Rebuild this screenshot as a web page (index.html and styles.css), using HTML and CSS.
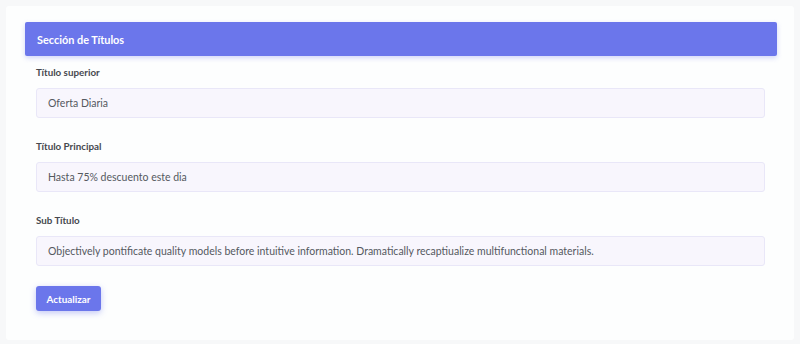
FILE: index.html
```html
<!DOCTYPE html>
<html lang="es">
<head>
<meta charset="utf-8">
<title>Sección de Títulos</title>
<link rel="stylesheet" href="styles.css">
</head>
<body>
<div class="card">
  <div class="card-header">Sección de Títulos</div>
  <form class="card-body">
    <div class="field">
      <label class="label">Título superior</label>
      <div class="input">Oferta Diaria</div>
    </div>
    <div class="field">
      <label class="label">Título Principal</label>
      <div class="input">Hasta 75% descuento este dia</div>
    </div>
    <div class="field">
      <label class="label">Sub Título</label>
      <div class="input">Objectively pontificate quality models before intuitive information. Dramatically recaptiualize multifunctional materials.</div>
    </div>
    <div class="actions">
      <button type="button" class="btn">Actualizar</button>
    </div>
  </form>
</div>
</body>
</html>
```
FILE: styles.css
```css
html, body {
  margin: 0;
  padding: 0;
}
body {
  background: #f7f8f9;
  font-family: "Lato", "Noto Sans", sans-serif;
  padding: 6px 6px 4px 6px;
  height: 344px;
  box-sizing: border-box;
}
.card {
  background: #fdfefe;
  border-radius: 3px;
  padding: 16px 17px 0 19px;
  height: 334px;
  box-sizing: border-box;
}
.card-header {
  background: #6b76eb;
  color: #fff;
  font-weight: 700;
  font-size: 10.9px;
  height: 34px;
  display: flex;
  align-items: center;
  padding-left: 12px;
  border-radius: 2px;
  box-shadow: 0 2px 5px rgba(107, 118, 235, 0.3);
}
.card-body {
  padding: 10px 12px 0 11px;
  display: flex;
  flex-direction: column;
}
.field {
  display: flex;
  flex-direction: column;
}
.field + .field {
  margin-top: 22px;
}
.label {
  font-size: 9.8px;
  font-weight: 700;
  color: #46494f;
  line-height: 12px;
  margin-bottom: 10px;
}
.input {
  height: 30px;
  box-sizing: border-box;
  background: #f8f6fd;
  border: 1px solid #e9e7f8;
  border-radius: 3px;
  padding: 0 11px;
  display: flex;
  align-items: center;
  font-size: 10.5px;
  color: #55595f;
}
.actions {
  margin-top: 20px;
}
.btn {
  background: #6b76eb;
  color: #fff;
  border: none;
  border-radius: 3px;
  font-family: inherit;
  font-weight: 700;
  font-size: 9.9px;
  width: 65px;
  height: 25px;
  padding: 0;
  box-shadow: 0 2px 6px rgba(107, 118, 235, 0.4);
}
```
